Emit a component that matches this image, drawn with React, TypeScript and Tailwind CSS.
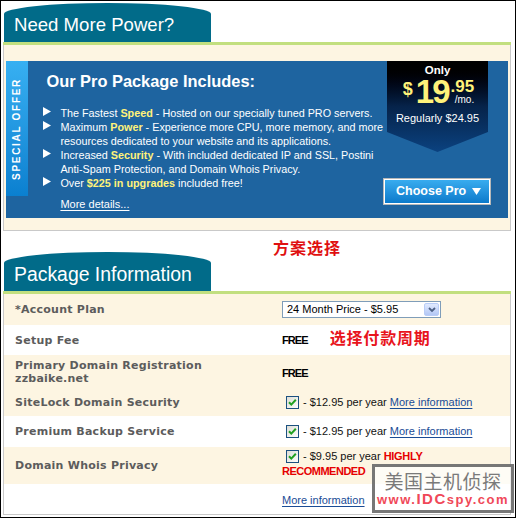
import type { FC, ReactNode } from "react";

const Tri: FC = () => (
  <svg width="8" height="9" viewBox="0 0 8 9" className="mt-[1px] shrink-0">
    <path d="M0 0 L8 4.5 L0 9 Z" fill="#fff" />
  </svg>
);

const Check: FC = () => (
  <svg width="13" height="13" viewBox="0 0 13 13" className="shrink-0">
    <defs>
      <linearGradient id="cbg" x1="0" y1="0" x2="1" y2="1">
        <stop offset="0" stopColor="#dcdcd4" />
        <stop offset="1" stopColor="#ffffff" />
      </linearGradient>
    </defs>
    <rect x="0.5" y="0.5" width="12" height="12" fill="url(#cbg)" stroke="#1c5180" />
    <path d="M3 6.2 L5.3 8.6 L9.8 3.8" stroke="#21a121" strokeWidth="2" fill="none" />
  </svg>
);

const Tab: FC<{ children: ReactNode; size: string }> = ({ children, size }) => (
  <div className="ml-[1px] w-[207px] h-[39px] bg-[#016b89] rounded-tl-[50%_11px] rounded-tr-[50%_11px] flex items-end pl-[10px] pb-[7px]">
    <span className={`text-white leading-none ${size}`}>{children}</span>
  </div>
);

const Y: FC<{ children: ReactNode }> = ({ children }) => (
  <b className="text-[#fff27a]">{children}</b>
);

const rows = [
  { label: "*Account Plan", bg: "bg-[#fdf5e2]", h: "h-[31px]" },
  { label: "Setup Fee", bg: "bg-white", h: "h-[30px]" },
  { label: "Primary Domain Registration", sub: "zzbaike.net", bg: "bg-[#fdf5e2]", h: "h-[33px]" },
  { label: "SiteLock Domain Security", bg: "bg-[#fdf5e2]", h: "h-[28px]" },
  { label: "Premium Backup Service", bg: "bg-white", h: "h-[31px]" },
  { label: "Domain Whois Privacy", bg: "bg-[#fdf5e2]", h: "h-[37px]" },
  { label: "", bg: "bg-white", h: "h-[30px]" },
];

const MoreInfo: FC = () => (
  <a className="text-[#1a4c96] underline underline-offset-[2px] text-[11px]">More information</a>
);

const rightCell = (i: number): ReactNode => {
  switch (i) {
    case 0:
      return (
        <div className="w-[159px] h-[17px] border border-[#7f9db9] bg-white flex items-center justify-between pl-[4px] pr-[1px]">
          <span className="text-[11px] text-black">24 Month Price - $5.95</span>
          <div className="w-[15px] h-[13px] rounded-[2px] bg-linear-to-b from-[#e1eafe] to-[#b3c7f5] border border-[#b9cdf7] flex items-center justify-center">
            <svg width="8" height="6" viewBox="0 0 8 6">
              <path d="M1 1 L4 4 L7 1" stroke="#4d6185" strokeWidth="1.8" fill="none" />
            </svg>
          </div>
        </div>
      );
    case 1:
      return (
        <div className="flex items-center">
          <b className="text-[11px] tracking-[-0.9px] text-black">FREE</b>
          <span className="ml-[22px] -mt-[6px] text-[16px] leading-[16px] tracking-[0.8px] font-bold text-[#e8141c] font-['Noto_Sans_CJK_SC',sans-serif]">
            选择付款周期
          </span>
        </div>
      );
    case 2:
      return <b className="text-[11px] tracking-[-0.9px] text-black">FREE</b>;
    case 3:
    case 4:
      return (
        <div className="flex items-center text-[11px] text-[#111]">
          <span className="ml-[4px] mr-[4px]"><Check /></span>
          <span>- $12.95 per year&nbsp;</span>
          <MoreInfo />
        </div>
      );
    case 5:
      return (
        <div className="text-[11px] text-[#111] leading-[15px] -mt-[4px]">
          <div className="flex items-center">
            <span className="ml-[4px] mr-[4px]"><Check /></span>
            <span>- $9.95 per year&nbsp;</span>
            <b className="text-[#e60000] tracking-[-0.3px]">HIGHLY</b>
          </div>
          <b className="text-[#e60000] tracking-[-0.5px]">RECOMMENDED</b>
        </div>
      );
    default:
      return <MoreInfo />;
  }
};

export default function App() {
  return (
    <div className="relative w-[516px] h-[518px] border border-black bg-white pl-[2px] pr-[4px] pt-[2px] overflow-hidden font-['Liberation_Sans',Arial,sans-serif]">
      {/* Need more power */}
      <Tab size="text-[18.6px]">Need More Power?</Tab>
      <div className="h-[3px] bg-[#c2df7f]" />
      <div className="h-[186px] bg-[#fdf5e2] border-x border-b border-[#c9c9c9] pt-[16px] pl-[2px]">
        <div className="w-[502px] h-[157px] bg-[#1e64a0] flex">
          <div className="w-[23px] h-[135px] bg-linear-to-b from-[#37b0f2] to-[#0a80d0] flex items-center justify-center">
            <span className="[writing-mode:vertical-rl] rotate-180 text-white text-[10px] font-bold tracking-[1.7px] leading-none">
              SPECIAL OFFER
            </span>
          </div>

          <div className="flex-1 pl-[15px] pt-[10px] text-white">
            <h2 className="text-[16.4px] font-bold leading-[20px] pl-[3px]">Our Pro Package Includes:</h2>
            <ul className="mt-[15px] text-[10.8px] leading-[14px] whitespace-nowrap">
              <li className="flex gap-[9px]">
                <Tri />
                <span>The Fastest <Y>Speed</Y> - Hosted on our specially tuned PRO servers.</span>
              </li>
              <li className="flex gap-[9px]">
                <Tri />
                <span>
                  Maximum <Y>Power</Y> - Experience more CPU, more memory, and more
                  <br />
                  resources dedicated to your website and its applications.
                </span>
              </li>
              <li className="flex gap-[9px]">
                <Tri />
                <span>
                  Increased <Y>Security</Y> - With included dedicated IP and SSL, Postini
                  <br />
                  Anti-Spam Protection, and Domain Whois Privacy.
                </span>
              </li>
              <li className="flex gap-[9px]">
                <Tri />
                <span>Over <Y>$225 in upgrades</Y> included free!</span>
              </li>
            </ul>
            <a className="block mt-[6px] ml-[17px] text-[11px] underline underline-offset-[2px]">More details...</a>
          </div>

          <div className="w-[125px] shrink-0">
            <div className="ml-[4px] w-[101px] h-[91px] bg-linear-to-b from-[#000000] via-[#06234a] to-[#0b4280] [clip-path:polygon(0_0,100%_0,100%_78%,50%_100%,0_78%)] flex flex-col items-center pt-[2px] text-white">
              <b className="text-[11.5px] leading-[14px]">Only</b>
              <div className="flex items-start h-[30px] ml-[2px]">
                <b className="text-[18px] leading-none text-[#fff27a] mt-[3px] mr-[3px]">$</b>
                <b className="text-[33px] leading-[30px] tracking-[-2px] text-[#fff27a]">19</b>
                <div className="flex flex-col items-end ml-[2px]">
                  <b className="text-[17px] leading-[17px] text-[#fff27a] mt-[1px]">.95</b>
                  <span className="text-[10px] leading-[10px]">/mo.</span>
                </div>
              </div>
              <span className="text-[11px] leading-[14px] mt-[4px]">Regularly $24.95</span>
            </div>
            <div className="mt-[26px] w-[108px] h-[27px] border border-[#b8b8b8] bg-white p-px">
              <div className="w-full h-full bg-linear-to-b from-[#38acef] to-[#0a7acb] flex items-center justify-between pl-[11px] pr-[8px]">
                <b className="text-white text-[12.5px]">Choose Pro</b>
                <svg width="9" height="7" viewBox="0 0 9 7">
                  <path d="M0 0 L9 0 L4.5 7 Z" fill="#fff" />
                </svg>
              </div>
            </div>
          </div>
        </div>
      </div>

      {/* heading */}
      <div className="h-[21px] pl-[270px] pt-[8px]">
        <span className="block text-[16px] leading-[16px] text-[#e01010] font-bold tracking-[1px] font-['Noto_Sans_CJK_SC',sans-serif]">
          方案选择
        </span>
      </div>

      {/* package information */}
      <Tab size="text-[19.4px]">Package Information</Tab>
      <div className="h-[3px] bg-[#c2df7f]" />
      <div className="border-x border-b border-[#c9c9c9]">
        {rows.map((r, i) => (
          <div key={i} className={`flex items-center ${r.bg} ${r.h}`}>
            <div className="w-[278px] pl-[11px] font-['DejaVu_Sans',Verdana,sans-serif] font-bold text-[11px] tracking-[0.25px] text-[#5c5c5c] leading-[13px]">
              {r.label}
              {r.sub && <div>{r.sub}</div>}
            </div>
            <div className="flex-1">{rightCell(i)}</div>
          </div>
        ))}
      </div>

      {/* watermark */}
      <div className="absolute left-[371px] top-[463px] w-[142px] h-[49px] border-[3px] border-[#555]/80 bg-white/65 flex flex-col items-center justify-center">
        <span className="text-[19px] leading-[20px] tracking-[0.5px] text-[#7a7a7a] font-['Noto_Sans_CJK_SC',sans-serif]">
          美国主机侦探
        </span>
        <b className="text-[13px] leading-[15px] tracking-[1.5px] text-[#f04858] [text-shadow:0_0_2px_#fff]">
          www.<span className="text-[15px]">IDC</span>spy.com
        </b>
      </div>
    </div>
  );
}
